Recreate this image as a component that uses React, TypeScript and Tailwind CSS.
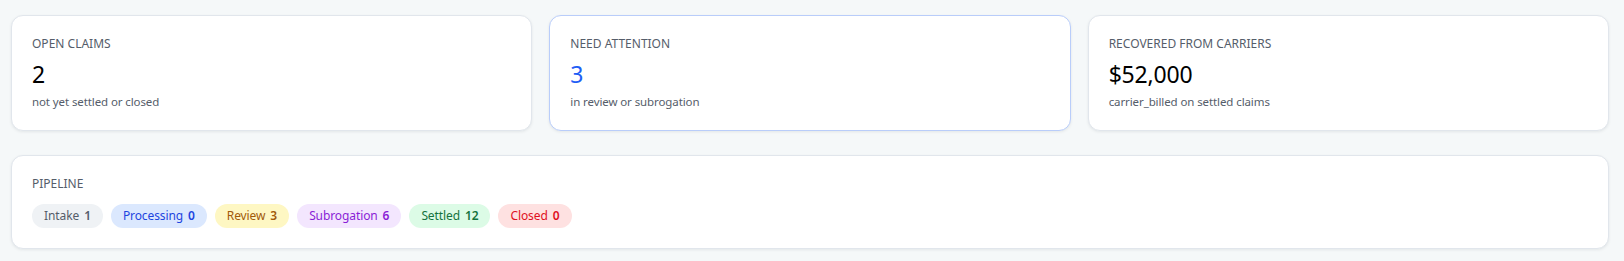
import React from "react";

interface StatCardProps {
  label: string;
  value: string;
  note: string;
  highlight?: boolean;
}

function StatCard({ label, value, note, highlight }: StatCardProps) {
  return (
    <div
      className={`rounded-xl border bg-white px-5 py-5 shadow-[0_1px_3px_rgba(15,23,42,0.08)] ${
        highlight ? "border-[#b9cdfa]" : "border-[#e1e6ec]"
      }`}
    >
      <div className="text-xs leading-4 uppercase text-[#555d6a]">{label}</div>
      <div
        className={`mt-1.5 text-[23px] leading-8 tracking-[-0.2px] ${
          highlight ? "text-[#1f5ef5]" : "text-black"
        }`}
      >
        {value}
      </div>
      <div className="mt-1 text-[11.5px] leading-4 tracking-[-0.1px] text-[#555d6a]">{note}</div>
    </div>
  );
}

const stages = [
  { name: "Intake", count: 1, className: "bg-[#eff2f5] text-[#555d6a]" },
  { name: "Processing", count: 0, className: "bg-[#dbe8fe] text-[#1d45e0]" },
  { name: "Review", count: 3, className: "bg-[#fef7c3] text-[#a15a0a]" },
  { name: "Subrogation", count: 6, className: "bg-[#f3e6fe] text-[#8a1fd6]" },
  { name: "Settled", count: 12, className: "bg-[#dcfbe6] text-[#14733d]" },
  { name: "Closed", count: 0, className: "bg-[#fee1e1] text-[#e0101e]" },
];

export default function App() {
  return (
    <div
      className="min-h-[261px] bg-[#f5f8f9] pl-[11px] pr-[15px] pt-[15px] pb-[14px]"
      style={{ fontFamily: '"Noto Sans", "Open Sans", sans-serif' }}
    >
      <div className="grid grid-cols-3 gap-[17px]">
        <StatCard label="Open claims" value="2" note="not yet settled or closed" />
        <StatCard
          label="Need attention"
          value="3"
          note="in review or subrogation"
          highlight
        />
        <StatCard
          label="Recovered from carriers"
          value="$52,000"
          note="carrier_billed on settled claims"
        />
      </div>

      <div className="mt-6 rounded-xl border border-[#e1e6ec] bg-white px-5 py-5 shadow-[0_1px_3px_rgba(15,23,42,0.08)]">
        <div className="text-xs leading-4 uppercase text-[#555d6a]">Pipeline</div>
        <div className="mt-3 flex flex-wrap gap-2">
          {stages.map((s) => (
            <span
              key={s.name}
              className={`flex h-6 items-center gap-[5px] rounded-full px-3 text-xs tracking-[-0.1px] ${s.className}`}
            >
              {s.name}
              <span className="font-semibold">{s.count}</span>
            </span>
          ))}
        </div>
      </div>
    </div>
  );
}
